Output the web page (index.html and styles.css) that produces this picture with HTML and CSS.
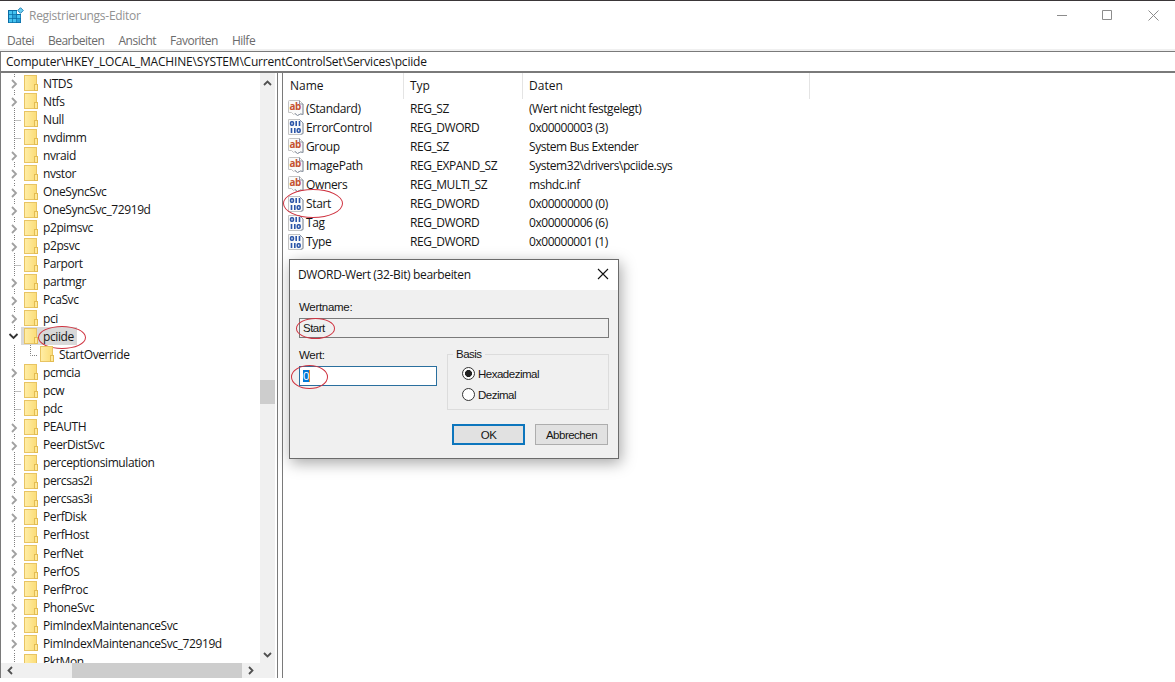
FILE: index.html
```html
<!DOCTYPE html>
<html lang="de">
<head>
  <meta charset="utf-8">
  <title>Registrierungs-Editor</title>
  <link rel="stylesheet" href="styles.css">
</head>
<body>
  <svg class="defs">
    <symbol id="icon-string" viewBox="0 0 16 16">
      <path d="M.5 1.500Q.5.5 1.500.5H11.500L15 4V14.500L12.500 14 9.500 15.500 7 13.500 5.500 14.500 3.500 12.500H.5Z" fill="#fafafa" stroke="#c4c4c4"/>
      <path d="M11.500.5V4H15V14.500L12.500 14 9.500 15.500 7 13.500" fill="none" stroke="#8d97a5"/>
      <text x="1.500" y="10.300" textLength="11.500" lengthAdjust="spacingAndGlyphs" class="glyph-ab">ab</text>
    </symbol>
    <symbol id="icon-binary" viewBox="0 0 16 16">
      <path d="M.5.5H11.500L15 4V14.500L12.500 15.500H.5Z" fill="#fafafa" stroke="#c4c4c4"/>
      <path d="M11.500.5L15 4V14.500L12.500 15.500" fill="none" stroke="#8d97a5"/>
      <g fill="none" stroke="#2b55a8" stroke-width="1.600">
        <rect x="2.600" y="2.800" width="2.800" height="3.400" rx="1"/>
        <path d="M8.200 2V7M11.500 2V7M3.500 9V14M6.800 9V14"/>
        <rect x="9.300" y="9.800" width="2.800" height="3.400" rx="1"/>
      </g>
    </symbol>
  </svg>

  <div class="window">
    <div class="titlebar">
      <svg class="app-icon" width="16" height="17" viewBox="0 0 16 17">
        <rect x="0" y="3" width="13" height="13" fill="#0a6ca5"/>
        <path d="M1 4h3.300v3.300H1zM5 4h3.300v3.300H5zM1 8h3.300v3.300H1zM9 8h3.300v3.300H9zM1 12h3.300v3.300H1zM5 12h3.300v3.300H5z" fill="#45c2ef"/>
        <path d="M5 8h3.300v3.300H5zM9 12h3.300v3.300H9z" fill="#2a9fd6"/>
        <rect x="9" y="1" width="5" height="6" fill="#fff"/>
        <path d="M12.500 .700L15.300 3.500 12.500 6.300 9.700 3.500Z" fill="#6fd0f2" stroke="#2583b5"/>
      </svg>
      <span class="title">Registrierungs-Editor</span>
      <svg class="controls" width="103" height="12" viewBox="0 0 103 12" fill="none" stroke="#8c8c8c">
        <path d="M0 6.500H10M45.500 1.500h9v9h-9zM91.500 1.500l10 10M101.500 1.500l-10 10"/>
      </svg>
    </div>
    <div class="menubar">
      <span>Datei</span><span>Bearbeiten</span><span>Ansicht</span><span>Favoriten</span><span>Hilfe</span>
    </div>
    <div class="address"><span>Computer\HKEY_LOCAL_MACHINE\SYSTEM\CurrentControlSet\Services\pciide</span></div>

    <div class="main">
      <div class="tree-pane">
        <div class="tree-top">
          <div class="tree" id="tree"></div>
          <div class="vscroll">
            <svg width="9" height="6" viewBox="0 0 9 6"><path d="M1 5L4.500 1.500 8 5"/></svg>
            <div class="vthumb"></div>
            <svg width="9" height="6" viewBox="0 0 9 6"><path d="M1 1L4.500 4.500 8 1"/></svg>
          </div>
        </div>
        <div class="hscroll">
          <svg width="6" height="9" viewBox="0 0 6 9"><path d="M5 1L1.500 4.500 5 8"/></svg>
          <div class="hthumb"></div>
          <svg width="6" height="9" viewBox="0 0 6 9"><path d="M1 1L4.500 4.500 1 8"/></svg>
        </div>
      </div>

      <div class="list-pane">
        <div class="list-head"><span>Name</span><span>Typ</span><span>Daten</span></div>
        <div id="values"></div>
      </div>
    </div>
  </div>

  <div class="dialog">
    <div class="dialog-title">
      <span>DWORD-Wert (32-Bit) bearbeiten</span>
      <svg width="12" height="12" viewBox="0 0 12 12" fill="none" stroke="#111" stroke-width="1.100"><path d="M1 1l10 10M11 1L1 11"/></svg>
    </div>
    <div class="dialog-body">
      <label>Wertname:</label>
      <div class="field readonly"><span class="mark mark-name">Start</span></div>
      <div class="dialog-row">
        <div class="value-col">
          <label>Wert:</label>
          <div class="field active"><span class="mark mark-value"><span class="selected">0</span></span></div>
        </div>
        <div class="group">
          <span class="legend">Basis</span>
          <div class="option"><i class="radio checked"></i>Hexadezimal</div>
          <div class="option"><i class="radio"></i>Dezimal</div>
        </div>
      </div>
      <div class="buttons">
        <div class="btn default">OK</div>
        <div class="btn">Abbrechen</div>
      </div>
    </div>
  </div>

  <script src="script.js"></script>
</body>
</html>
```
FILE: styles.css
```css
*,
*::after {
  box-sizing: border-box;
}
body {
  margin: 0;
  background: #fff;
  color: #151515;
  font-family: "Open Sans", "Noto Sans", sans-serif;
  font-size: 12px;
  overflow: hidden;
}
.defs {
  display: none;
}
.glyph-ab {
  font: bold 11px "Open Sans", sans-serif;
  fill: #c4512f;
}
.window {
  height: 682px;
  border-top: 1px solid #3a3638;
  display: flex;
  flex-direction: column;
}
.titlebar {
  height: 29px;
  display: flex;
  align-items: center;
  padding: 0 15px 0 8px;
  color: #929292;
}
.title {
  margin-left: 5px;
  letter-spacing: -0.28px;
}
.controls {
  margin-left: auto;
  margin-bottom: 2px;
}
.menubar {
  height: 21px;
  padding: 2px 0 0 7px;
  display: flex;
  align-items: center;
  gap: 14px;
  color: #6b6b6b;
  border-bottom: 2px solid #f0f0f0;
  letter-spacing: -0.5px;
}
.address {
  height: 22px;
  border: 1px solid #7a7a7a;
  border-right: 0;
  border-bottom-width: 2px;
  padding-left: 5px;
  line-height: 19px;
  letter-spacing: -0.2px;
}
.main {
  height: 605px;
  display: flex;
}
.tree-pane {
  width: 278px;
  border-left: 1px solid #7a7a7a;
  border-right: 1px solid #7a7a7a;
  display: flex;
  flex-direction: column;
}
.tree-top {
  height: 590px;
  display: flex;
}
.tree {
  flex: 1;
  padding-top: 1px;
  overflow: hidden;
}
.tree-row {
  height: 18.08px;
  display: flex;
  align-items: center;
  padding-left: 7px;
  white-space: nowrap;
  letter-spacing: -0.4px;
}
.tree-row .twig {
  width: 16px;
  height: 18px;
  flex: none;
}
.twig path {
  fill: none;
}
.twig .arrow {
  stroke: #a0a0a0;
  stroke-width: 1.8;
}
.twig .arrow.open {
  stroke: #333;
}
.twig .dots {
  stroke: #808080;
  stroke-dasharray: 1 1;
}
.folder {
  position: relative;
  width: 13px;
  height: 16px;
  margin-right: 6px;
  flex: none;
  background: linear-gradient(90deg, #ffeda5, #fbdd79);
  border: 1px solid #e8c463;
}
.folder::after {
  content: "";
  position: absolute;
  right: -2px;
  bottom: -1px;
  width: 4px;
  height: 7px;
  background: #ffe999;
  border: 1px solid #e3bc52;
}
.tree-row.child {
  padding-left: 23px;
}
.item {
  display: flex;
  align-items: center;
  height: 18px;
}
.item.selected-key {
  background: #d9d9d9;
  padding: 0 3px 0 3px;
  margin-left: -3px;
}
.mark {
  position: relative;
}
.mark::after {
  content: "";
  position: absolute;
  border: 1px solid #cf3340;
  border-radius: 50%;
}
.mark-key::after {
  left: -5px;
  top: -2px;
  width: 48px;
  height: 23px;
}
.vscroll {
  width: 15px;
  margin-right: 2px;
  background: #f0f0f0;
  display: flex;
  flex-direction: column;
  align-items: center;
  padding: 7px 0 5px;
}
.vscroll path,
.hscroll path {
  fill: none;
  stroke: #505050;
  stroke-width: 1.8;
}
.vthumb {
  width: 15px;
  height: 24px;
  background: #cdcdcd;
  margin: 294px 0 auto;
}
.hscroll {
  height: 15px;
  width: 274px;
  background: #f0f0f0;
  display: flex;
  align-items: center;
  padding-left: 6px;
}
.hthumb {
  width: 170px;
  height: 15px;
  background: #cdcdcd;
  margin: 0 6px 0 59px;
}
.list-pane {
  flex: 1;
  margin-left: 4px;
  border-left: 1px solid #7a7a7a;
}
.list-head {
  display: flex;
  height: 25.5px;
  line-height: 25px;
}
.list-head span {
  border-right: 1px solid #e4e4e4;
  padding-left: 7px;
  width: 121px;
}
.list-head span:nth-child(2) {
  width: 119px;
  padding-left: 6px;
}
.list-head span:nth-child(3) {
  width: 287px;
  padding-left: 6px;
}
.value-row {
  display: grid;
  grid-template-columns: 122px 119px 1fr;
  align-items: center;
  height: 19.1px;
  padding-left: 5px;
  letter-spacing: -0.45px;
}
.value-name {
  display: flex;
  align-items: center;
  gap: 2px;
  letter-spacing: -0.35px;
}
.value-name svg {
  width: 16px;
  height: 16px;
  flex: none;
}
.mark-row::after {
  left: -5px;
  top: -6px;
  width: 60px;
  height: 29px;
}
.dialog {
  position: absolute;
  left: 289px;
  top: 259px;
  width: 330px;
  height: 200px;
  border: 1px solid #6b6b6b;
  background: #f0f0f0;
  box-shadow: 2px 4px 14px rgba(0, 0, 0, 0.35);
}
.dialog-title {
  height: 30px;
  background: #fff;
  display: flex;
  align-items: center;
  justify-content: space-between;
  padding: 0 9px 2px 8px;
  letter-spacing: -0.35px;
}
.dialog-body {
  padding: 10px 9px 0;
  font-family: "Liberation Sans", Arial, sans-serif;
  font-size: 11.5px;
  letter-spacing: -0.5px;
}
.dialog-body label {
  display: block;
  height: 14px;
  line-height: 14px;
  letter-spacing: -0.3px;
}
.field {
  height: 20px;
  margin-top: 4px;
  border: 1px solid #7a7a7a;
  padding-left: 3px;
  line-height: 18px;
}
.field.active {
  background: #fff;
  border-color: #2a6f9e;
}
.selected {
  background: #0078d7;
  color: #fff;
  border-right: 1px solid #e08a30;
}
.mark-name::after {
  left: -7px;
  top: -4px;
  width: 39px;
  height: 21px;
}
.mark-value::after {
  left: -12px;
  top: -5px;
  width: 37px;
  height: 24px;
}
.dialog-row {
  display: flex;
  justify-content: space-between;
  margin-top: 10px;
}
.value-col {
  width: 138px;
}
.group {
  position: relative;
  width: 162px;
  height: 56px;
  margin-top: 6px;
  border: 1px solid #dcdcdc;
  padding: 8px 0 0 14px;
}
.legend {
  position: absolute;
  left: 5px;
  top: -7px;
  padding: 0 3px;
  background: #f0f0f0;
}
.option {
  display: flex;
  align-items: center;
  gap: 3px;
  height: 21px;
}
.radio {
  width: 13px;
  height: 13px;
  border: 1px solid #333;
  border-radius: 50%;
  background: #fff;
}
.radio.checked {
  background: radial-gradient(circle, #222 3.2px, #fff 3.8px);
}
.buttons {
  display: flex;
  justify-content: flex-end;
  gap: 10px;
  margin-top: 14px;
  padding-right: 1px;
}
.btn {
  width: 73px;
  height: 21px;
  line-height: 20px;
  text-align: center;
  background: #e1e1e1;
  border: 1px solid #adadad;
}
.btn.default {
  border: 2px solid #0d76bd;
  line-height: 18px;
}
```
FILE: script.js
```js
// + collapsed, - expanded, . no children, > child entry
const keys = [
  '+NTDS', '+Ntfs', '.Null', '.nvdimm', '+nvraid', '+nvstor', '+OneSyncSvc',
  '+OneSyncSvc_72919d', '+p2pimsvc', '+p2psvc', '.Parport', '+partmgr', '+PcaSvc',
  '+pci', '-pciide', '>StartOverride', '+pcmcia', '.pcw', '.pdc', '+PEAUTH',
  '+PeerDistSvc', '.perceptionsimulation', '+percsas2i', '+percsas3i', '+PerfDisk',
  '.PerfHost', '+PerfNet', '+PerfOS', '+PerfProc', '+PhoneSvc',
  '+PimIndexMaintenanceSvc', '+PimIndexMaintenanceSvc_72919d', '.PktMon'
];

const values = [
  ['(Standard)', 'REG_SZ', '(Wert nicht festgelegt)'],
  ['ErrorControl', 'REG_DWORD', '0x00000003 (3)'],
  ['Group', 'REG_SZ', 'System Bus Extender'],
  ['ImagePath', 'REG_EXPAND_SZ', 'System32\\drivers\\pciide.sys'],
  ['Owners', 'REG_MULTI_SZ', 'mshdc.inf'],
  ['Start', 'REG_DWORD', '0x00000000 (0)'],
  ['Tag', 'REG_DWORD', '0x00000006 (6)'],
  ['Type', 'REG_DWORD', '0x00000001 (1)']
];

const twigs = {
  '+': '<path class="dots" d="M6.500 0V4M6.500 16V18"/><path class="arrow" d="M4 6L8 10 4 14"/>',
  '-': '<path class="dots" d="M6.500 0V3"/><path class="arrow open" d="M1.500 7L5.500 11 9.500 7"/>',
  '.': '<path class="dots" d="M6.500 0V18M6.500 10.500H13"/>',
  '>': '<path class="dots" d="M-9.500 0V18M6.500 0V10.500H13"/>'
};

document.getElementById('tree').innerHTML = keys.map(key => {
  const type = key[0];
  const name = key.slice(1);
  const open = type === '-';
  return `<div class="tree-row ${type === '>' ? 'child' : ''}">
    <svg class="twig" viewBox="0 0 16 18" overflow="visible">${twigs[type]}</svg>
    <div class="item ${open ? 'selected-key' : ''}"><i class="folder"></i><span class="${open ? 'mark mark-key' : ''}">${name}</span></div>
  </div>`;
}).join('');

document.getElementById('values').innerHTML = values.map(([name, type, data]) => {
  const icon = type === 'REG_DWORD' ? 'icon-binary' : 'icon-string';
  return `<div class="value-row">
    <div class="value-name ${name === 'Start' ? 'mark mark-row' : ''}"><svg><use href="#${icon}"/></svg>${name}</div>
    <span>${type}</span>
    <span>${data}</span>
  </div>`;
}).join('');
```
